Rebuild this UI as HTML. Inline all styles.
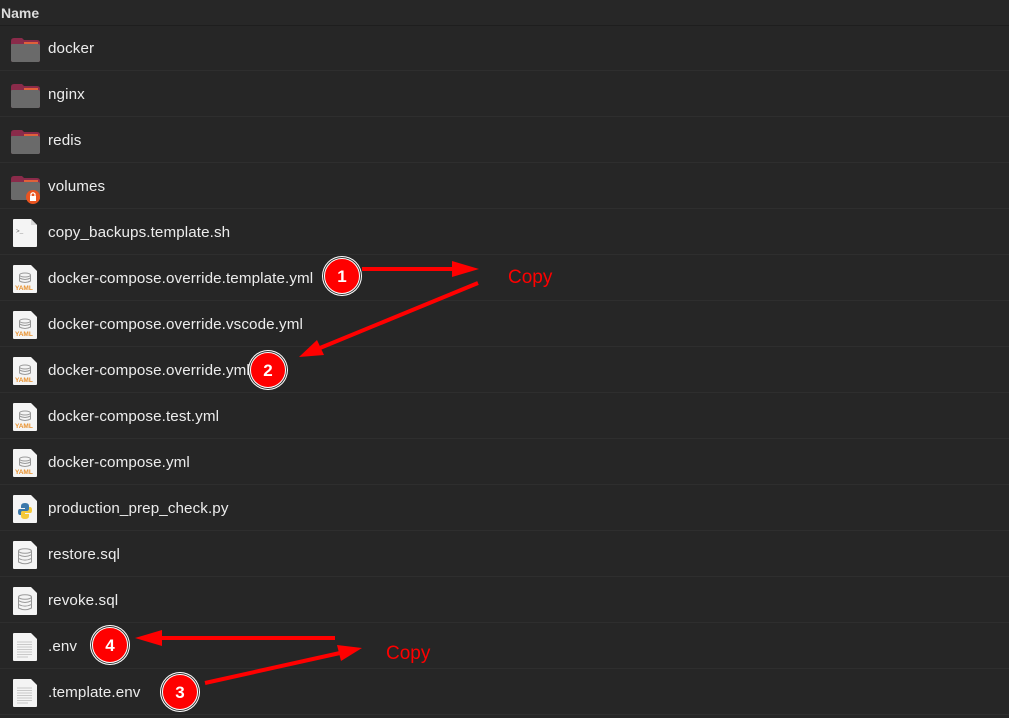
<!DOCTYPE html>
<html><head><meta charset="utf-8"><style>
*{margin:0;padding:0;box-sizing:border-box}
body{width:1009px;height:718px;background:#262626;font-family:"Liberation Sans","DejaVu Sans",sans-serif;overflow:hidden;position:relative;color:#eeeeee}
.hdr{position:absolute;left:0;top:0;width:1009px;height:26px;border-bottom:1px solid #1e1e1e;background:#272727}
.hdr span{position:absolute;left:1px;top:5px;font-size:14px;font-weight:bold;color:#dcdcdc}
.row{position:absolute;left:0;width:1009px;height:46px;border-bottom:1px solid #2e2e2e}
.row .t{position:absolute;left:48px;top:15px;font-size:15.2px;color:#ececec;letter-spacing:0.1px}
.ic{position:absolute;left:10px;top:9px}
svg.ov{position:absolute;left:0;top:0}
</style></head><body>
<div class="hdr"><span>Name</span></div>

<div class="row" style="top:25px"><svg class="ic" width="32" height="30"><path d="M1 7 Q1 4 4 4 H12 L14 6 H27 Q30 6 30 9 V26 Q30 28 28 28 H3 Q1 28 1 26Z" fill="#8a2b4a"/><path d="M2 10 H28 Q30 10 30 12 V26 Q30 28 28 28 H3 Q1 28 1 26 V11 Q1 10 2 10Z" fill="#6a6a6a"/><path d="M14 8 H28 V10 H14Z" fill="#e0603a"/></svg><span class="t">docker</span></div>
<div class="row" style="top:71px"><svg class="ic" width="32" height="30"><path d="M1 7 Q1 4 4 4 H12 L14 6 H27 Q30 6 30 9 V26 Q30 28 28 28 H3 Q1 28 1 26Z" fill="#8a2b4a"/><path d="M2 10 H28 Q30 10 30 12 V26 Q30 28 28 28 H3 Q1 28 1 26 V11 Q1 10 2 10Z" fill="#6a6a6a"/><path d="M14 8 H28 V10 H14Z" fill="#e0603a"/></svg><span class="t">nginx</span></div>
<div class="row" style="top:117px"><svg class="ic" width="32" height="30"><path d="M1 7 Q1 4 4 4 H12 L14 6 H27 Q30 6 30 9 V26 Q30 28 28 28 H3 Q1 28 1 26Z" fill="#8a2b4a"/><path d="M2 10 H28 Q30 10 30 12 V26 Q30 28 28 28 H3 Q1 28 1 26 V11 Q1 10 2 10Z" fill="#6a6a6a"/><path d="M14 8 H28 V10 H14Z" fill="#e0603a"/></svg><span class="t">redis</span></div>
<div class="row" style="top:163px"><svg class="ic" width="34" height="34"><path d="M1 7 Q1 4 4 4 H12 L14 6 H27 Q30 6 30 9 V26 Q30 28 28 28 H3 Q1 28 1 26Z" fill="#8a2b4a"/><path d="M2 10 H28 Q30 10 30 12 V26 Q30 28 28 28 H3 Q1 28 1 26 V11 Q1 10 2 10Z" fill="#6a6a6a"/><path d="M14 8 H28 V10 H14Z" fill="#e0603a"/><circle cx="23" cy="25" r="7" fill="#e95420"/><rect x="20" y="24" width="6" height="5" fill="#fff"/><path d="M21 24 V22 Q23 19.5 25 22 V24" stroke="#fff" stroke-width="1.3" fill="none"/></svg><span class="t">volumes</span></div>

<div class="row" style="top:209px"><svg class="ic" width="30" height="32"><path d="M4 1 H21 L27 7 V28 Q27 29 26 29 H4 Q3 29 3 28 V2 Q3 1 4 1Z" fill="#f4f4f4"/><path d="M21 1 V7 H27" fill="#d8d8d8"/><text x="6" y="15" font-size="6" fill="#666" font-family="Liberation Mono">&gt;_</text></svg><span class="t">copy_backups.template.sh</span></div>

<div class="row" style="top:255px"><svg class="ic" width="30" height="32"><path d="M4 1 H21 L27 7 V28 Q27 29 26 29 H4 Q3 29 3 28 V2 Q3 1 4 1Z" fill="#f4f4f4"/><ellipse cx="15" cy="11" rx="5.5" ry="2" fill="none" stroke="#999"/><path d="M9.5 11 V17 Q15 20 20.5 17 V11 M9.5 14 Q15 17 20.5 14" fill="none" stroke="#999"/><text x="5" y="26" font-size="6.5" fill="#e8912d" font-weight="bold">YAML</text></svg><span class="t">docker-compose.override.template.yml</span></div>
<div class="row" style="top:301px"><svg class="ic" width="30" height="32"><path d="M4 1 H21 L27 7 V28 Q27 29 26 29 H4 Q3 29 3 28 V2 Q3 1 4 1Z" fill="#f4f4f4"/><ellipse cx="15" cy="11" rx="5.5" ry="2" fill="none" stroke="#999"/><path d="M9.5 11 V17 Q15 20 20.5 17 V11 M9.5 14 Q15 17 20.5 14" fill="none" stroke="#999"/><text x="5" y="26" font-size="6.5" fill="#e8912d" font-weight="bold">YAML</text></svg><span class="t">docker-compose.override.vscode.yml</span></div>
<div class="row" style="top:347px"><svg class="ic" width="30" height="32"><path d="M4 1 H21 L27 7 V28 Q27 29 26 29 H4 Q3 29 3 28 V2 Q3 1 4 1Z" fill="#f4f4f4"/><ellipse cx="15" cy="11" rx="5.5" ry="2" fill="none" stroke="#999"/><path d="M9.5 11 V17 Q15 20 20.5 17 V11 M9.5 14 Q15 17 20.5 14" fill="none" stroke="#999"/><text x="5" y="26" font-size="6.5" fill="#e8912d" font-weight="bold">YAML</text></svg><span class="t">docker-compose.override.yml</span></div>
<div class="row" style="top:393px"><svg class="ic" width="30" height="32"><path d="M4 1 H21 L27 7 V28 Q27 29 26 29 H4 Q3 29 3 28 V2 Q3 1 4 1Z" fill="#f4f4f4"/><ellipse cx="15" cy="11" rx="5.5" ry="2" fill="none" stroke="#999"/><path d="M9.5 11 V17 Q15 20 20.5 17 V11 M9.5 14 Q15 17 20.5 14" fill="none" stroke="#999"/><text x="5" y="26" font-size="6.5" fill="#e8912d" font-weight="bold">YAML</text></svg><span class="t">docker-compose.test.yml</span></div>
<div class="row" style="top:439px"><svg class="ic" width="30" height="32"><path d="M4 1 H21 L27 7 V28 Q27 29 26 29 H4 Q3 29 3 28 V2 Q3 1 4 1Z" fill="#f4f4f4"/><ellipse cx="15" cy="11" rx="5.5" ry="2" fill="none" stroke="#999"/><path d="M9.5 11 V17 Q15 20 20.5 17 V11 M9.5 14 Q15 17 20.5 14" fill="none" stroke="#999"/><text x="5" y="26" font-size="6.5" fill="#e8912d" font-weight="bold">YAML</text></svg><span class="t">docker-compose.yml</span></div>

<div class="row" style="top:485px"><svg class="ic" width="30" height="32"><path d="M4 1 H21 L27 7 V28 Q27 29 26 29 H4 Q3 29 3 28 V2 Q3 1 4 1Z" fill="#f4f4f4"/><path d="M15 9 Q11 9 11 12 V14 H15 V15 H9.5 Q8 15 8 18 Q8 21 10 21 H11 V19 Q11 17 13 17 H17 Q19 17 19 15 V12 Q19 9 15 9Z" fill="#3c78aa"/><path d="M15 25 Q19 25 19 22 V20 H15 V19 H20.5 Q22 19 22 16 Q22 13 20 13 H19 V15 Q19 17 17 17 H13 Q11 17 11 19 V22 Q11 25 15 25Z" fill="#f5c93a"/></svg><span class="t">production_prep_check.py</span></div>

<div class="row" style="top:531px"><svg class="ic" width="30" height="32"><path d="M4 1 H21 L27 7 V28 Q27 29 26 29 H4 Q3 29 3 28 V2 Q3 1 4 1Z" fill="#f4f4f4"/><ellipse cx="15" cy="11" rx="6.5" ry="2.3" fill="none" stroke="#999"/><path d="M8.5 11 V22 Q15 25.5 21.5 22 V11 M8.5 14.7 Q15 18.2 21.5 14.7 M8.5 18.4 Q15 21.9 21.5 18.4" fill="none" stroke="#999"/></svg><span class="t">restore.sql</span></div>
<div class="row" style="top:577px"><svg class="ic" width="30" height="32"><path d="M4 1 H21 L27 7 V28 Q27 29 26 29 H4 Q3 29 3 28 V2 Q3 1 4 1Z" fill="#f4f4f4"/><ellipse cx="15" cy="11" rx="6.5" ry="2.3" fill="none" stroke="#999"/><path d="M8.5 11 V22 Q15 25.5 21.5 22 V11 M8.5 14.7 Q15 18.2 21.5 14.7 M8.5 18.4 Q15 21.9 21.5 18.4" fill="none" stroke="#999"/></svg><span class="t">revoke.sql</span></div>

<div class="row" style="top:623px"><svg class="ic" width="30" height="32"><path d="M4 1 H21 L27 7 V28 Q27 29 26 29 H4 Q3 29 3 28 V2 Q3 1 4 1Z" fill="#f4f4f4"/><path d="M7 10H22M7 12.5H22M7 15H22M7 17.5H22M7 20H22M7 22.5H22M7 25H18" stroke="#bbb" stroke-width="0.8"/></svg><span class="t">.env</span></div>
<div class="row" style="top:669px"><svg class="ic" width="30" height="32"><path d="M4 1 H21 L27 7 V28 Q27 29 26 29 H4 Q3 29 3 28 V2 Q3 1 4 1Z" fill="#f4f4f4"/><path d="M7 10H22M7 12.5H22M7 15H22M7 17.5H22M7 20H22M7 22.5H22M7 25H18" stroke="#bbb" stroke-width="0.8"/></svg><span class="t">.template.env</span></div>

<svg class="ov" width="1009" height="718">
<g stroke="#ff0000" stroke-width="4" fill="#ff0000">
<line x1="362" y1="269" x2="455" y2="269"/><polygon points="452,261 479,269 452,277" stroke="none"/>
<line x1="478" y1="283" x2="320" y2="348"/><polygon points="299,357 317,340 324,355" stroke="none"/>
<line x1="335" y1="638" x2="160" y2="638"/><polygon points="135,638 162,630 162,646" stroke="none"/>
<line x1="205" y1="683" x2="340" y2="653"/><polygon points="362,648 337,645 341,661" stroke="none"/>
</g>
<g font-family="Liberation Sans, sans-serif">
<text x="508" y="283" font-size="19" fill="#ff0000">Copy</text>
<text x="386" y="659" font-size="19" fill="#ff0000">Copy</text>
</g>
<g font-family="Liberation Sans, sans-serif" font-weight="bold" font-size="17" text-anchor="middle">
<circle cx="342" cy="276" r="20" fill="#fff"/><circle cx="342" cy="276" r="19" fill="#333"/><circle cx="342" cy="276" r="17.5" fill="#ff0000" stroke="#fff" stroke-width="1"/><text x="342" y="282" fill="#fff">1</text>
<circle cx="268" cy="370" r="20" fill="#fff"/><circle cx="268" cy="370" r="19" fill="#333"/><circle cx="268" cy="370" r="17.5" fill="#ff0000" stroke="#fff" stroke-width="1"/><text x="268" y="376" fill="#fff">2</text>
<circle cx="110" cy="645" r="20" fill="#fff"/><circle cx="110" cy="645" r="19" fill="#333"/><circle cx="110" cy="645" r="17.5" fill="#ff0000" stroke="#fff" stroke-width="1"/><text x="110" y="651" fill="#fff">4</text>
<circle cx="180" cy="692" r="20" fill="#fff"/><circle cx="180" cy="692" r="19" fill="#333"/><circle cx="180" cy="692" r="17.5" fill="#ff0000" stroke="#fff" stroke-width="1"/><text x="180" y="698" fill="#fff">3</text>
</g>
</svg>
</body></html>
